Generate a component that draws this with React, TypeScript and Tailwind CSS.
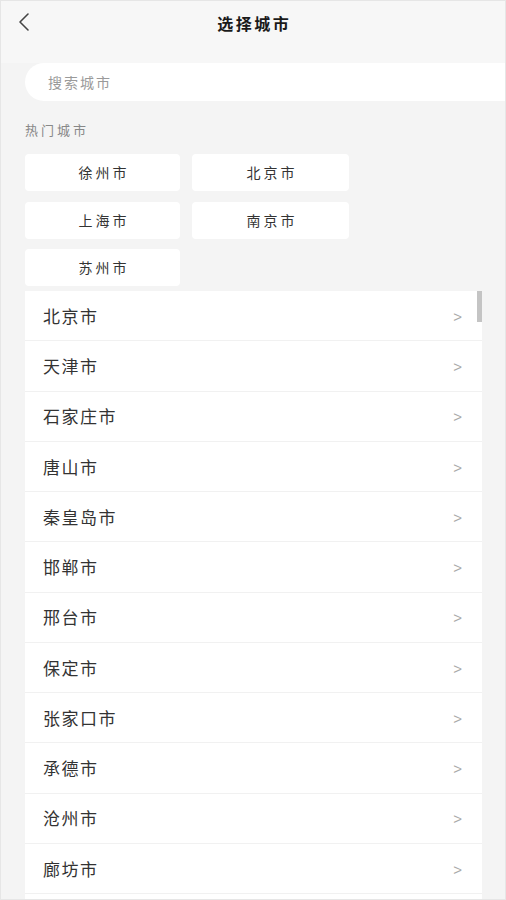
import React from "react"

const HOT_CITIES = ["徐州市", "北京市", "上海市", "南京市", "苏州市"]

const CITIES = [
  "北京市",
  "天津市",
  "石家庄市",
  "唐山市",
  "秦皇岛市",
  "邯郸市",
  "邢台市",
  "保定市",
  "张家口市",
  "承德市",
  "沧州市",
  "廊坊市",
]

export default function App() {
  return (
    <div
      className="w-[506px] h-[900px] overflow-hidden bg-[#f4f4f4] border border-[#e6e6e6] box-border"
      style={{ fontFamily: '"Noto Sans CJK SC", "Noto Sans", sans-serif' }}
    >
      {/* header */}
      <div className="relative h-[44px] flex items-center justify-center bg-[#f7f7f7]">
        <button className="absolute left-[13px] top-[10px] w-[20px] h-[22px] flex items-center justify-center">
          <svg width="14" height="20" viewBox="0 0 14 20" fill="none">
            <path d="M11 2 L3 10 L11 18" stroke="#444" strokeWidth="1.6" strokeLinecap="round" strokeLinejoin="round" />
          </svg>
        </button>
        <h1 className="text-[16px] font-bold text-[#1a1a1a] tracking-[2.5px] pl-[2.5px]">选择城市</h1>
      </div>

      <div className="bg-[#f7f7f7] h-[18px]" />

      {/* search */}
      <div className="pl-[24px]">
        <div className="w-[520px] h-[38px] rounded-full bg-white flex items-center pl-[23px] text-[14px] tracking-[2px] text-[#9a9a9a]">
          搜索城市
        </div>
      </div>

      {/* hot cities */}
      <div className="px-[24px] pt-[20px]">
        <div className="text-[13px] tracking-[3px] text-[#888] leading-[18px]">热门城市</div>
        <div className="mt-[15px] grid grid-cols-[155px_157px] gap-x-[12px] gap-y-[10.5px]">
          {HOT_CITIES.map((c) => (
            <div
              key={c}
              className="h-[37px] rounded-[4px] bg-white flex items-center justify-center pl-[3px] text-[14px] tracking-[3px] text-[#333]"
            >
              {c}
            </div>
          ))}
        </div>
      </div>

      {/* city list */}
      <div className="relative ml-[24px] mt-[5px] w-[457px] bg-white">
        {CITIES.map((c) => (
          <div
            key={c}
            className="h-[50.25px] flex items-center justify-between pl-[18px] pr-[20px] border-b border-[#f1f1f1]"
          >
            <span className="text-[17px] tracking-[1.5px] text-[#333]">{c}</span>
            <span className="text-[15px] text-[#aaa] pt-[3px]" style={{ fontFamily: '"Liberation Sans", sans-serif' }}>
              &gt;
            </span>
          </div>
        ))}
        <div className="h-[20px]" />
        <div className="absolute right-0 top-0 w-[5px] h-[31px] bg-[#c4c4c4]" />
      </div>
    </div>
  )
}
